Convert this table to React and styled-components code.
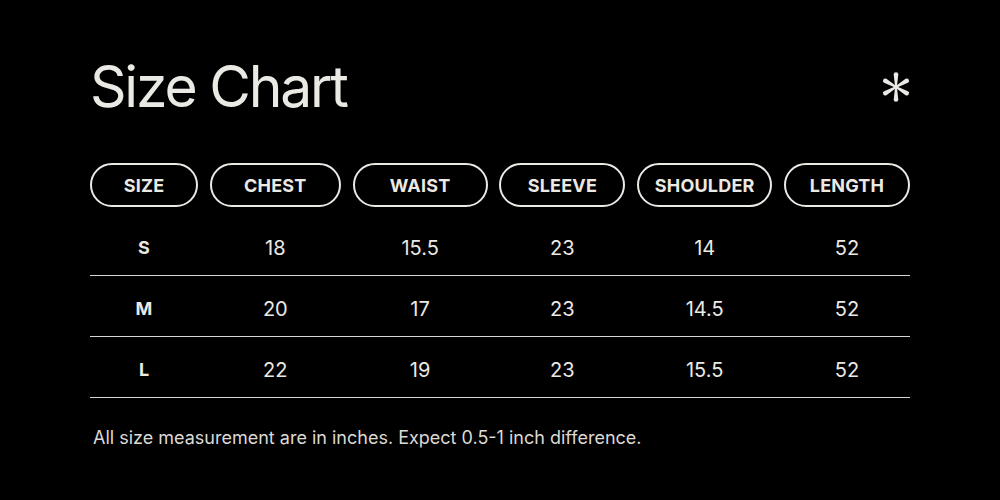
import styled, { createGlobalStyle } from "styled-components";

const GlobalStyle = createGlobalStyle`
  html, body {
    margin: 0;
    padding: 0;
    background: #000;
  }
  body {
    font-family: Inter, "Noto Sans", sans-serif;
    color: #ebe9e4;
  }
`;

const Page = styled.div`
  width: 1000px;
  height: 500px;
  background: #000;
  box-sizing: border-box;
  padding: 52px 90px 0 90px;
`;

const Header = styled.div`
  display: flex;
  align-items: center;
  justify-content: space-between;
  height: 70px;
`;

const Title = styled.h1`
  margin: 0;
  font-size: 57px;
  font-weight: 400;
  letter-spacing: -2.2px;
  line-height: 70px;
  color: #ebe9e4;
`;

const Star = styled.svg`
  width: 36px;
  height: 36px;
  margin-right: -4px;
`;

const Grid = styled.div`
  display: grid;
  grid-template-columns: 108px 131px 135px 126px 135px 126px;
  justify-content: space-between;
`;

const HeadRow = styled(Grid)`
  margin-top: 41px;
`;

const Pill = styled.div`
  height: 44px;
  box-sizing: border-box;
  border: 2px solid #ebe9e4;
  border-radius: 22px;
  display: flex;
  align-items: center;
  justify-content: center;
  font-size: 18px;
  font-weight: 700;
  letter-spacing: 0.2px;
  text-transform: uppercase;
`;

const Body = styled.div`
  margin-top: 9px;
`;

const Row = styled(Grid)`
  height: 60px;
  padding-top: 4px;
  box-sizing: border-box;
  border-bottom: 1px solid #d9d7d2;
  align-items: center;
  margin-bottom: 1px;
`;

const Cell = styled.div`
  text-align: center;
  font-weight: ${(p) => (p.$bold ? 700 : 400)};
  font-size: ${(p) => (p.$bold ? "18px" : "20px")};
`;

const Note = styled.p`
  margin: 29px 0 0 3px;
  font-size: 18px;
  color: #dcdad5;
`;

const heads = ["Size", "Chest", "Waist", "Sleeve", "Shoulder", "Length"];
const rows = [
  ["S", "18", "15.5", "23", "14", "52"],
  ["M", "20", "17", "23", "14.5", "52"],
  ["L", "22", "19", "23", "15.5", "52"],
];

function Asterisk() {
  return (
    <Star viewBox="-18 -18 36 36">
      <g fill="#ebe9e4">
        {[0, 60, 120, 180, 240, 300].map((a) => (
          <path
            key={a}
            transform={`rotate(${a})`}
            d="M -0.9 0 L -2.3 -12.4 A 2.3 2.3 0 0 1 2.3 -12.4 L 0.9 0 Z"
          />
        ))}
        <circle r="1.5" />
      </g>
    </Star>
  );
}

export default function App() {
  return (
    <Page>
      <GlobalStyle />
      <Header>
        <Title>Size Chart</Title>
        <Asterisk />
      </Header>
      <HeadRow>
        {heads.map((h) => (
          <Pill key={h}>{h}</Pill>
        ))}
      </HeadRow>
      <Body>
        {rows.map((r) => (
          <Row key={r[0]}>
            {r.map((v, i) => (
              <Cell key={i} $bold={i === 0}>
                {v}
              </Cell>
            ))}
          </Row>
        ))}
      </Body>
      <Note>All size measurement are in inches. Expect 0.5-1 inch difference.</Note>
    </Page>
  );
}
